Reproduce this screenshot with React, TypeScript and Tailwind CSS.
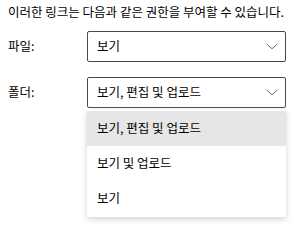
import React from "react";

const font = {
  fontFamily: '"Noto Sans CJK KR", "Noto Sans", sans-serif',
};

function Chevron() {
  return (
    <svg width="12" height="7" viewBox="0 0 12 7" className="shrink-0">
      <path d="M0.5 0.8 L6 5.8 L11.5 0.8" fill="none" stroke="#707070" strokeWidth="1" />
    </svg>
  );
}

function Select({ value }: { value: string }) {
  return (
    <div className="flex h-[31px] w-[199px] items-center justify-between rounded-[2px] border border-[#4a4a4a] bg-white pl-[9px] pr-[7px]">
      <span>{value}</span>
      <Chevron />
    </div>
  );
}

export default function App() {
  const options = ["보기, 편집 및 업로드", "보기 및 업로드", "보기"];
  return (
    <div
      className="h-[231px] w-[300px] overflow-hidden bg-white text-[12.5px] leading-none text-black"
      style={font}
    >
      <p className="pl-[8px] pt-[6px]">
        이러한 링크는 다음과 같은 권한을 부여할 수 있습니다.
      </p>
      <div className="mt-[12px] flex items-center">
        <span className="w-[87px] pl-[8px]">파일:</span>
        <Select value="보기" />
      </div>
      <div className="mt-[15px] flex items-center">
        <span className="w-[87px] pl-[8px]">폴더:</span>
        <Select value="보기, 편집 및 업로드" />
      </div>
      <div className="ml-[87px] mt-[2px] w-[199px] bg-white py-[1px] shadow-[0_2px_6px_rgba(0,0,0,0.18)]">
        {options.map((o, i) => (
          <div
            key={o}
            className={`flex h-[35px] items-center pl-[10px] ${i === 0 ? "bg-[#e6e6e6]" : ""}`}
          >
            {o}
          </div>
        ))}
      </div>
    </div>
  );
}
